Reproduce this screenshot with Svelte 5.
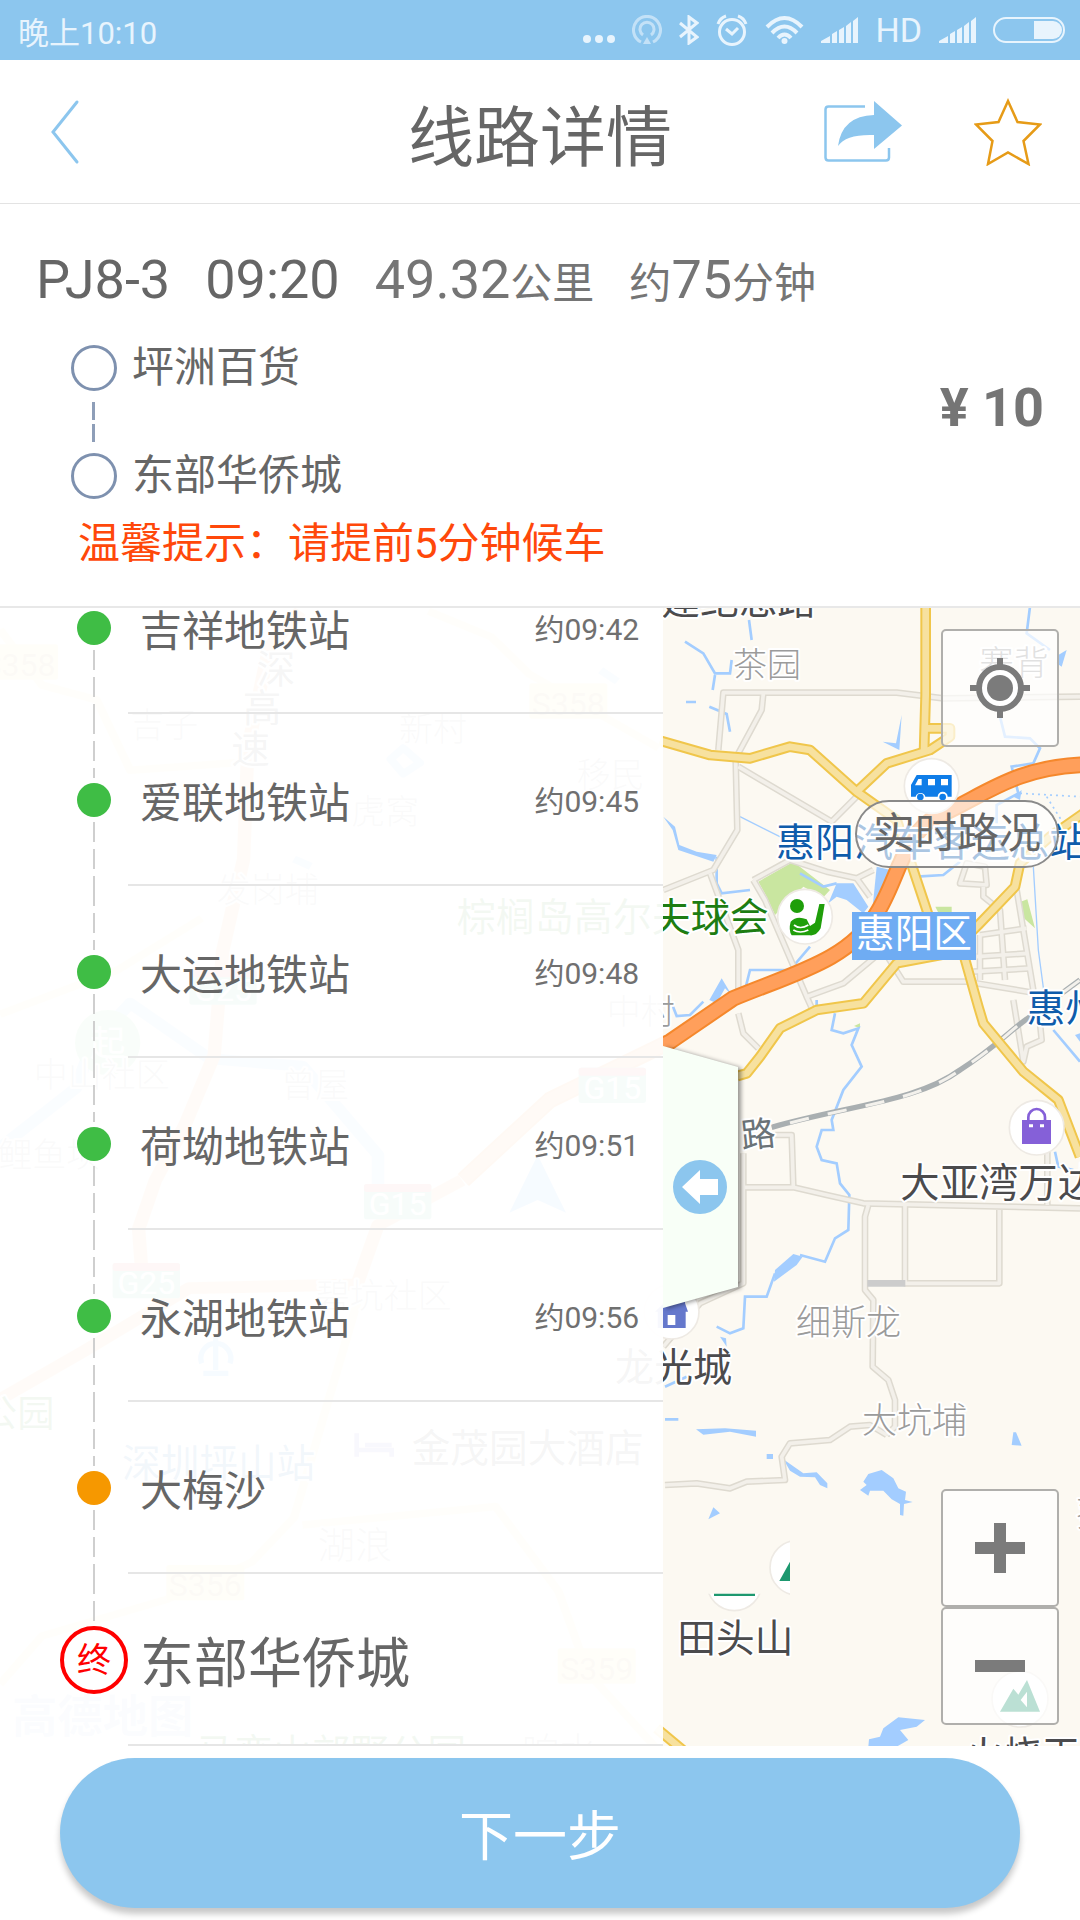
<script>
  const stations = [
    { name: '吉祥地铁站', time: '约09:42' },
    { name: '爱联地铁站', time: '约09:45' },
    { name: '大运地铁站', time: '约09:48' },
    { name: '荷坳地铁站', time: '约09:51' },
    { name: '永湖地铁站', time: '约09:56' },
    { name: '大梅沙', time: '', kind: 'drop' },
    { name: '东部华侨城', time: '', kind: 'terminal' }
  ];

  const minorRoads = [
    'M1290 290L880 295L740 278H220L205 450',
    'M340 280L335 330L265 460',
    'M257 480L262 690L190 810L40 870',
    'M265 500L545 665L620 590',
    'M180 820L265 1050V1200',
    'M310 840L420 780L530 815L620 835L670 810',
    'M310 840L345 900L470 1190L580 1150L700 1050',
    'M620 835L660 890',
    'M265 1240L280 1300L325 1345',
    'M470 1190L490 1235',
    'M930 850L950 790L1005 800L1010 855Z',
    'M1000 860V890L1050 930L1065 1140',
    'M1100 870L1150 1170',
    'M990 1005L1130 985M980 1070L1135 1060M970 1115L1140 1105',
    'M990 1005V1140M700 1050L760 1145H950L1160 1180',
    'M1090 1200L1120 1385L1130 1340L1175 1320L1170 1270',
    'M375 1605H425L430 1760',
    'M285 1762H430L530 1785L640 1810L1290 1825',
    'M280 1660V2050L150 2110L40 2240',
    'M655 1815L645 1850V2070L670 2100L668 2300L715 2340L735 2400V2480L710 2505',
    'M765 1815V2050H1048V1830',
    'M1192 1655V1815',
    'M45 2655L140 2650L240 2665L290 2645L405 2640L395 2570L420 2530L540 2520L600 2480L660 2475L710 2505'
  ];

  const mainRoads = [
    'M30 422L180 465L300 475L420 440L480 450L620 575L740 660L790 810L840 960L940 1060L985 1220L1000 1270L1120 1415L1225 1500L1290 1670',
    'M620 575L710 490L840 450L900 410V385H825',
    'M827 0V285L822 460',
    'M1300 640L1200 710L1110 790L1095 860L985 975L900 1060L740 1090L690 1150L640 1210L500 1230L390 1285L330 1370L290 1420L262 1428',
    'M20 3385L110 3460'
  ];

  const highway = 'M1310 494C1090 500 1000 590 860 650C760 700 740 850 680 940C600 1080 430 1120 250 1195L60 1325L-300 1500L-560 1740';

  const streams = [
    'M297 60L305 120M105 125L160 160L195 220H240L245 180M195 225L188 270M108 306H138M178 320L230 342L240 395',
    'M1140 20L1130 100L1200 150',
    'M1050 350L1065 410L1140 415L1170 445L1150 490L1085 500L1105 580L1040 615V670',
    'M200 770V850L215 880L300 870M450 820L520 860L560 850',
    'M800 830L880 825L930 785',
    'M480 1040L420 1110L300 1110L285 1170',
    'M65 1210L80 1248L120 1245L160 1205M500 1200V1220',
    'M555 1240L545 1290L580 1300L625 1285L605 1335L635 1400L580 1470L545 1560L550 1590H515L500 1640L515 1680L560 1690L570 1750L598 1785L595 1890L555 1915L525 1985L450 1965',
    'M375 2020L350 2090H285L280 2185L240 2200L200 2180M1210 1290L1290 1385',
    'M45 2360L110 2330M45 2458H85M1215 1655L1225 1700L1270 1710'
  ];

  const lakes = [
    '755,345 748,450 698,425 738,430',
    '40,650 75,680 88,735 140,755 200,765 190,785 85,750 68,690',
    '560,850 610,850 655,920 640,940 590,900 560,890 535,910',
    '680,800 722,810 700,870 668,920',
    '1225,165 1250,150 1235,200 1220,190',
    '1090,590 1115,570 1110,600',
    '178,1200 215,1135 245,1185 225,1165 200,1210',
    '375,2010 430,1962 458,1970 440,1995 372,2045',
    '138,2488 225,2485 318,2492 318,2510 240,2495 160,2504',
    '350,2562 369,2562 369,2577 350,2577',
    '400,2578 460,2620 500,2617 532,2650 532,2665 510,2655 495,2632 450,2630 420,2612',
    '630,2670 650,2655 640,2645 655,2622 695,2610 730,2635 745,2665 768,2675 765,2700 788,2706 762,2712 760,2747 750,2745 750,2712 725,2698 700,2672 660,2672 655,2687',
    '175,2758 190,2722 210,2740',
    '1085,2535 1090,2497 1098,2497 1115,2537',
    '655,3440 657,3418 690,3410 700,3385 745,3352 825,3360 800,3380 750,3390 775,3420 740,3440',
    '1275,1305 1290,1300 1290,1325',
    '210,2210 228,2215 230,2240'
  ];

  const westHighways = [
    'M715 30L640 130L590 400L580 700L530 950L510 1230L440 1420L370 1568L330 1700L340 1850',
    'M1100 1568L900 1690L850 1850L450 1860L200 2030L0 2160'
  ];
  const westRoads = [
    'M0 80L100 230L230 270L310 460L560 440',
    'M1020 30L1170 100L1260 200L1568 400',
    'M0 1120L280 1000L480 860',
    'M0 2930L100 2800L400 2700L600 2600L700 2480L850 1900',
    'M720 2500L1180 2450L1330 2680L1400 2900L1568 3110'
  ];

  const labels = [
    { t: '建纪恩路', x: 34, y: 42, s: 116, k: 'dark' },
    { t: '茶园', x: 249, y: 232, s: 102, k: 'grey' },
    { t: '寨背', x: 988, y: 226, s: 104, k: 'grey' },
    { t: '惠阳汽车客运总站', x: 378, y: 768, s: 117, k: 'blue' },
    { t: '棕榈岛高尔夫球会', x: -580, y: 993, s: 117, k: 'green' },
    { t: '惠州', x: 1130, y: 1266, s: 116, k: 'blue' },
    { t: '中村', x: -130, y: 1272, s: 102, k: 'grey' },
    { t: '大亚湾万达广场', x: 751, y: 1792, s: 118, k: 'dark' },
    { t: '细斯龙', x: 438, y: 2204, s: 105, k: 'grey' },
    { t: '龙光城', x: -105, y: 2342, s: 117, k: 'dark' },
    { t: '大坑埔', x: 636, y: 2498, s: 105, k: 'grey' },
    { t: '葵', x: 1278, y: 2778, s: 105, k: 'grey' },
    { t: '田头山', x: 82, y: 3156, s: 116, k: 'dark' },
    { t: '火烧天', x: 943, y: 3508, s: 116, k: 'dark' },
    { t: '吉子', x: -1559, y: 411, s: 102, k: 'grey' },
    { t: '新村', x: -753, y: 422, s: 102, k: 'grey' },
    { t: '移民', x: -220, y: 560, s: 102, k: 'grey' },
    { t: '虎窝', x: -896, y: 672, s: 102, k: 'grey' },
    { t: '发岗埔', x: -1300, y: 905, s: 102, k: 'grey' },
    { t: '深', x: -1180, y: 250, s: 116, k: 'dark' },
    { t: '高', x: -1222, y: 366, s: 116, k: 'dark' },
    { t: '速', x: -1256, y: 488, s: 116, k: 'dark' },
    { t: '中山社区', x: -1849, y: 1460, s: 102, k: 'grey' },
    { t: '曾屋', x: -1107, y: 1492, s: 102, k: 'grey' },
    { t: '鲤鱼坝', x: -1955, y: 1702, s: 102, k: 'grey' },
    { t: '碧坑社区', x: -1003, y: 2124, s: 102, k: 'grey' },
    { t: '公园', x: -2010, y: 2480, s: 112, k: 'green' },
    { t: '深圳坪山站', x: -1584, y: 2630, s: 116, k: 'blue' },
    { t: '金茂园大酒店', x: -715, y: 2586, s: 116, k: 'dark' },
    { t: '湖浪', x: -997, y: 2878, s: 112, k: 'grey' },
    { t: '马峦山郊野公园', x: -1363, y: 3500, s: 116, k: 'green' },
    { t: '响水', x: -384, y: 3495, s: 112, k: 'grey' }
  ];

  const shields = [
    { t: 'S358', x: -2010, y: 133, k: 'provincial' },
    { t: 'S358', x: -362, y: 250, k: 'provincial' },
    { t: 'G25', x: -1382, y: 1108, k: 'national' },
    { t: 'G15', x: -214, y: 1403, k: 'national' },
    { t: 'G15', x: -858, y: 1752, k: 'national' },
    { t: 'G25', x: -1612, y: 1989, k: 'national' },
    { t: 'S356', x: -1451, y: 2895, k: 'provincial' },
    { t: 'S359', x: -277, y: 3145, k: 'provincial' }
  ];
</script>

{#snippet signal()}
  <svg width="37" height="26" viewBox="0 0 37 26" fill="currentColor" aria-hidden="true">
    <path d="M0 26V24L9 19V26ZM11 17L16 14V26H11ZM18 13L23 10V26H18ZM25 9L30 5V26H25ZM32 4L37 0V26H32Z" />
  </svg>
{/snippet}

<div class="screen">
  <div class="status">
    <span class="clock">晚上10:10</span>
    <div class="status-icons">
      <svg width="32" height="30" viewBox="0 0 32 30" fill="currentColor" aria-hidden="true">
        <circle cx="4" cy="24" r="4" /><circle cx="16" cy="24" r="4" /><circle cx="28" cy="24" r="4" />
      </svg>
      <svg class="dim" width="30" height="30" viewBox="0 0 30 30" fill="none" stroke="currentColor" stroke-width="3" aria-hidden="true">
        <path d="M9 27A13.500 13.500 0 1 1 21 27M11 20A7 7 0 1 1 19 20" />
        <path d="M15 22L19 29H11Z" fill="currentColor" stroke="none" />
      </svg>
      <svg width="20" height="30" viewBox="0 0 20 30" fill="none" stroke="currentColor" stroke-width="3" aria-hidden="true">
        <path d="M1 8L18 22L10 28V2L18 8L1 22" />
      </svg>
      <svg width="32" height="32" viewBox="0 0 32 32" fill="none" stroke="currentColor" stroke-width="3" aria-hidden="true">
        <circle cx="16" cy="18" r="12.500" /><path d="M10 15L16 20L22 14M2 10Q4 4 10 2M30 10Q28 4 22 2" />
      </svg>
      <svg width="39" height="28" viewBox="0 0 39 28" fill="none" stroke="currentColor" stroke-width="4" aria-hidden="true">
        <path d="M2 11Q19.500 -7 37 11M7 17Q19.500 4 32 17M13 22Q19.500 15 26 22" />
        <circle cx="19.500" cy="25" r="3" fill="currentColor" stroke="none" />
      </svg>
      {@render signal()}
      <span class="hd">HD</span>
      {@render signal()}
      <svg width="72" height="26" viewBox="0 0 72 26" fill="none" aria-hidden="true">
        <rect x="1" y="1" width="70" height="24" rx="12" stroke="currentColor" stroke-width="2" />
        <path d="M41 4H60A9 9 0 0 1 60 22H41Z" fill="currentColor" />
      </svg>
    </div>
  </div>

  <header class="bar">
    <button class="icon-btn back" aria-label="返回">
      <svg width="30" height="66" viewBox="0 0 30 66" fill="none" stroke="#8cc6ee" stroke-width="3" stroke-linecap="round" aria-hidden="true">
        <path d="M27 3L3 33L27 63" />
      </svg>
    </button>
    <h1>线路详情</h1>
    <div class="actions">
      <button class="icon-btn" aria-label="分享">
        <svg width="78" height="62" viewBox="0 0 78 62" aria-hidden="true">
          <path d="M41 5.500H4.500Q1.500 5.500 1.500 8.500V56.500Q1.500 59.500 4.500 59.500H62Q65 59.500 65 56.500V47" fill="none" stroke="#8cc6ee" stroke-width="2.500" />
          <path d="M50 0L78 24.500L50 48V34Q22 33 14 45Q18 15 50 14Z" fill="#8cc6ee" />
        </svg>
      </button>
      <button class="icon-btn" aria-label="收藏">
        <svg width="68" height="68" viewBox="0 0 68 68" fill="none" stroke="#e69b17" stroke-width="2.500" aria-hidden="true">
          <path d="M34 3L43.500 24L66 26.500L49.500 43L54.500 66L34 54.500L14 66L18.500 43L2 26.500L24.500 24Z" />
        </svg>
      </button>
    </div>
  </header>

  <section class="summary">
    <div class="facts">
      <span>PJ8-3</span>
      <span>09:20</span>
      <span class="soft">49.32<small>公里</small></span>
      <span class="soft"><small>约</small>75<small>分钟</small></span>
    </div>
    <div class="route">
      <div class="ends">
        <div class="end"><i class="ring"></i><span>坪洲百货</span></div>
        <div class="link"><i></i><i></i></div>
        <div class="end"><i class="ring"></i><span>东部华侨城</span></div>
      </div>
      <strong class="price">¥ 10</strong>
    </div>
    <p class="tip">温馨提示：请提前5分钟候车</p>
  </section>

  <main class="stage">
    <svg class="map" viewBox="-1950 24 3240 3414" preserveAspectRatio="xMidYMid slice" aria-hidden="true">
      <defs>
        <clipPath id="tile-left"><rect x="300" y="2700" width="120" height="400" /></clipPath>
        <clipPath id="tile-low"><rect x="100" y="2981" width="320" height="100" /></clipPath>
      </defs>
      <rect x="-1950" y="24" width="3240" height="3414" fill="#fcf9f2" />

      <g fill="#c9e6a0">
        <path d="M325 845L430 785L540 870L520 892L460 860L375 945L350 890Z" />
        <path d="M1112 905L1132 898L1155 985L1122 955ZM722 812L715 870L680 910L695 820ZM856 920H905V948H870Z" />
        <path d="M612 1278L630 1270V1285Z" />
      </g>
      <g fill="none" stroke="#a3cdff" stroke-width="8">
        {#each streams as d}<path {d} />{/each}
        <path d="M1150 800L1165 1050L1185 1200M270 650L430 730" stroke-width="4" />
        <path d="M1110 580L1290 590M1190 590L1240 670" stroke-width="5" stroke-dasharray="6 12" />
      </g>
      <g fill="#a3cdff">
        {#each lakes as points}<polygon {points} />{/each}
      </g>

      <g fill="none" stroke-linejoin="round">
        {#each minorRoads as d}<path {d} stroke="#dedad0" stroke-width="20" />{/each}
        {#each minorRoads as d}<path {d} stroke="#f3f0ea" stroke-width="11" />{/each}
        <path d="M652 2050H766" stroke="#cccccc" stroke-width="20" />
        <path d="M365 1582C600 1515 800 1505 930 1410C1040 1340 1080 1290 1140 1250L1290 1140" stroke="#a9afb1" stroke-width="16" />
        <path d="M420 1569C620 1515 800 1505 930 1410C1040 1340 1080 1290 1140 1250L1290 1140" stroke="#f3f1ec" stroke-width="9" stroke-dasharray="58 58" />
        {#each mainRoads as d}<path {d} stroke="#f0c64b" stroke-width="32" />{/each}
        {#each mainRoads as d}<path {d} stroke="#f7e19f" stroke-width="20" />{/each}
        <path d={highway} stroke="#f5882c" stroke-width="50" />
        <path d={highway} stroke="#ff9f5b" stroke-width="38" />
        <g transform="translate(-1950 0) scale(1.26 1.11)">
          <path d="M0 1480L180 1320L220 1200L310 1090L500 1240L720 1260L900 1500V1600" stroke="#a3cdff" stroke-width="30" />
          <path d="M930 430L960 400L1000 440L960 470ZM1430 190L1470 220M700 700L740 720" stroke="#a3cdff" stroke-width="20" />
          {#each westRoads as d}<path {d} stroke="#f9e6b0" stroke-width="20" />{/each}
          {#each westHighways as d}<path {d} stroke="#ffb27c" stroke-width="32" />{/each}
        </g>
      </g>

      <g class="poi">
        <circle cx="845" cy="558" r="82" />
        <circle cx="465" cy="950" r="82" />
        <circle cx="1160" cy="1583" r="82" />
        <circle cx="65" cy="2135" r="82" />
        <circle cx="1110" cy="3297" r="84" />
        <circle cx="442" cy="2903" r="82" clip-path="url(#tile-left)" />
        <circle cx="253" cy="2950" r="82" clip-path="url(#tile-low)" />
      </g>
      <path d="M783 555L800 525H905V590H893A15 15 0 0 0 863 590H826A15 15 0 0 0 797 590H783ZM795 556H815V537H805ZM834 537V556H855V537ZM873 537V556H894V537Z" fill="#0f7de8" fill-rule="evenodd" />
      <circle cx="811" cy="591" r="10" fill="#0f7de8" /><circle cx="878" cy="591" r="10" fill="#0f7de8" />
      <g fill="#1f9e0a">
        <circle cx="441" cy="918" r="21" />
        <path d="M422 965Q440 945 470 958L480 978L495 968L508 912H524L512 985Q500 1008 480 1006H425Q415 990 422 965Z" />
        <path d="M432 975Q450 990 475 975M430 990Q450 1002 475 990" fill="none" stroke="#fff" stroke-width="5" />
      </g>
      <path d="M1116 1560H1203V1632H1116Z" fill="#8560d8" />
      <path d="M1135 1562V1552A24 24 0 0 1 1185 1552V1562" fill="none" stroke="#8560d8" stroke-width="8" />
      <path d="M1137 1573H1149V1582H1137ZM1170 1573H1182V1582H1170Z" fill="#fff" />
      <path d="M15 2135L62 2090H105V2110L114 2135H107V2184H23V2135ZM53 2145V2175H76V2145Z" fill="#6578cc" fill-rule="evenodd" />
      <path d="M1050 3335L1090 3266L1105 3284L1131 3240L1170 3335ZM1131 3275L1112 3300L1131 3322Z" fill="#1d986f" fill-rule="evenodd" />
      <path d="M388 2943L420 2885V2943ZM192 2981H315V2988H192Z" fill="#1d986f" />
      <circle cx="-1627" cy="1328" r="98" fill="#8ad997" />
      <path d="M-337 1665L-422 1838L-337 1800L-252 1838Z" fill="#5aa5f0" />
      <path d="M-880 2500V2570M-880 2550H-775V2570M-855 2535H-775" stroke="#7d6fd0" stroke-width="14" fill="none" />
      <path d="M-1345 2290A45 45 0 1 1 -1260 2290M-1340 2320H-1265M-1303 2210V2310" stroke="#5aa5f0" stroke-width="16" fill="none" />

      {#each shields as s}
        {@const w = s.t.length === 4 ? 234 : 202}
        <g transform="translate({s.x} {s.y})">
          <rect width={w} height="106" rx="8" class={s.k} />
          {#if s.k === 'national'}<rect width={w} height="24" rx="8" fill="#e8605c" />{/if}
          <text class="shield {s.k}-text" x={w / 2} y="94" text-anchor="middle">{s.t}</text>
        </g>
      {/each}

      {#each labels as l}
        <text class="label {l.k}" x={l.x} y={l.y} font-size={l.s}>{l.t}</text>
      {/each}
      <text class="area" x="-1680" y="1368" font-size="106">起</text>
      <text class="label road" x="272" y="1640" font-size="104" transform="rotate(-6 325 1600)">路</text>
      <text class="label brand" x="-1914" y="3398" font-size="136">高德地图</text>

      <rect x="606" y="936" width="372" height="144" fill="#6facf3" />
      <text class="area" x="618" y="1042" font-size="116">惠阳区</text>
    </svg>

    <aside class="panel">
      <ol>
        {#each stations as s}
          <li class={s.kind ?? 'pick'}>
            <div class="track">
              <i class="dash"></i>
              {#if s.kind === 'terminal'}<b class="final">终</b>{:else}<b class="dot"></b>{/if}
              <i class="dash" class:hidden={s.kind === 'terminal'}></i>
            </div>
            <div class="station">
              <span class="name">{s.name}</span>
              {#if s.time}<time>{s.time}</time>{/if}
            </div>
          </li>
        {/each}
      </ol>
    </aside>

    <button class="handle" aria-label="收起站点列表">
      <svg width="75" height="262" viewBox="0 0 75 262" aria-hidden="true">
        <path d="M0 0L75 21V241L0 262Z" fill="#f8fff7" />
        <circle cx="37" cy="141" r="27" fill="#8cc6ee" />
        <path d="M19 141L37 124V133H55V149H37V158Z" fill="#fff" />
      </svg>
    </button>

    <div class="controls">
      <button class="square" aria-label="定位">
        <svg width="60" height="60" viewBox="0 0 60 60" fill="none" stroke="#7b7b7b" aria-hidden="true">
          <circle cx="30" cy="30" r="18" stroke="#fff" stroke-width="10" />
          <circle cx="30" cy="30" r="21" stroke-width="6" />
          <circle cx="30" cy="30" r="13" fill="#7b7b7b" stroke="none" />
          <path d="M30 0V8M30 52V60M0 30H8M52 30H60" stroke-width="6" />
        </svg>
      </button>
      <button class="traffic">实时路况</button>
      <div class="zoom">
        <button class="square" aria-label="放大">
          <svg width="50" height="50" viewBox="0 0 50 50" fill="#7b7b7b" aria-hidden="true">
            <path d="M19 0H31V19H50V31H31V50H19V31H0V19H19Z" />
          </svg>
        </button>
        <button class="square" aria-label="缩小">
          <svg width="50" height="50" viewBox="0 0 50 50" fill="#7b7b7b" aria-hidden="true">
            <path d="M0 19H50V31H0Z" />
          </svg>
        </button>
      </div>
    </div>
  </main>

  <footer>
    <button class="next">下一步</button>
  </footer>
</div>

<style>
  :global(body) {
    margin: 0;
    background: #fff;
  }
  .screen {
    display: flex;
    flex-direction: column;
    height: 100vh;
    background: #fff;
    color: #666;
    font-family: Roboto, 'Noto Sans CJK SC', sans-serif;
    font-size: 42px;
    font-weight: 400;
  }
  button {
    font: inherit;
    color: inherit;
    border: 0;
    padding: 0;
    background: none;
    cursor: pointer;
  }
  svg {
    display: block;
  }

  .status {
    display: flex;
    align-items: center;
    justify-content: space-between;
    flex: none;
    height: 60px;
    padding: 0 15px 0 18px;
    background: #8cc6ee;
    color: #e8f4fd;
    font-size: 31px;
  }
  .status-icons {
    display: flex;
    align-items: center;
    gap: 17px;
  }
  .dim {
    opacity: 0.6;
  }
  .hd {
    font-size: 34px;
  }

  .bar {
    display: grid;
    grid-template-columns: 1fr auto 1fr;
    align-items: center;
    flex: none;
    height: 143px;
    padding: 0 38px;
    border-bottom: 1px solid #e3e3e3;
  }
  h1 {
    margin: 0;
    font-family: 'Noto Sans CJK SC', sans-serif;
    font-size: 66px;
    font-weight: 400;
    line-height: 80px;
  }
  .back {
    justify-self: start;
    padding: 0 12px;
  }
  .actions {
    display: flex;
    align-items: center;
    justify-content: flex-end;
    gap: 72px;
  }

  .summary {
    flex: none;
    padding: 40px 36px 30px;
    border-bottom: 2px solid #e8e8e8;
  }
  .facts {
    display: flex;
    align-items: baseline;
    gap: 35px;
    font-size: 54px;
    line-height: 72px;
  }
  .facts small {
    font-size: 42px;
  }
  .soft {
    color: #757575;
  }
  .route {
    display: flex;
    align-items: flex-start;
    justify-content: space-between;
    padding: 18px 0 0 35px;
  }
  .end {
    display: flex;
    align-items: center;
    gap: 15px;
    line-height: 60px;
  }
  .ring {
    box-sizing: border-box;
    width: 46px;
    height: 46px;
    border: 3px solid #7e91af;
    border-radius: 50%;
  }
  .link {
    display: flex;
    flex-direction: column;
    gap: 4px;
    padding: 4px 0 4px 21px;
  }
  .link i {
    width: 3px;
    height: 18px;
    background: #8e9eb8;
  }
  .price {
    font-size: 54px;
    font-weight: 700;
    line-height: 140px;
    color: #757575;
  }
  .tip {
    margin: 6px 0 0 42px;
    color: #ff480a;
    line-height: 64px;
  }

  .stage {
    position: relative;
    display: flex;
    flex: 1;
    min-height: 0;
    overflow: hidden;
  }
  .map {
    position: absolute;
    inset: 0;
    width: 100%;
    height: 100%;
  }
  .poi circle {
    fill: #fff;
    stroke: #eeeae4;
    stroke-width: 5;
  }
  .label {
    paint-order: stroke;
    stroke: #fff;
    stroke-width: 12px;
    stroke-linejoin: round;
  }
  .dark {
    fill: #4b4b4d;
  }
  .grey {
    fill: #9b9b9b;
    font-weight: 300;
  }
  .blue {
    fill: #0f5cab;
  }
  .green {
    fill: #1d7d12;
  }
  .road {
    fill: #6b7378;
  }
  .brand {
    fill: #a9c8e8;
    font-weight: 700;
  }
  .area {
    fill: #fff;
  }
  .provincial {
    fill: #fbe38e;
  }
  .national {
    fill: #5fc7a4;
  }
  .shield {
    font-size: 96px;
  }
  .provincial-text {
    fill: #b89858;
  }
  .national-text {
    fill: #fff;
  }

  .panel {
    position: relative;
    display: flex;
    flex-direction: column-reverse;
    box-sizing: border-box;
    width: 61.4%;
    overflow-y: auto;
    scrollbar-width: none;
    background: rgba(255, 255, 255, 0.95);
  }
  ol {
    margin: 0;
    padding: 0;
    list-style: none;
  }
  li {
    display: flex;
    height: 172px;
  }
  .track {
    display: flex;
    flex-direction: column;
    align-items: center;
    width: 68px;
    padding-left: 60px;
  }
  .dash {
    flex: 1;
    width: 2px;
    background: repeating-linear-gradient(#cfcfcf 0 20px, transparent 20px 27px);
  }
  .hidden {
    visibility: hidden;
  }
  .dot {
    width: 34px;
    height: 34px;
    margin: 5px 0;
    border-radius: 50%;
    background: #3fbd45;
  }
  .drop .dot {
    background: #f69800;
  }
  .final {
    display: flex;
    align-items: center;
    justify-content: center;
    box-sizing: border-box;
    width: 68px;
    height: 68px;
    border: 4px solid #f00;
    border-radius: 50%;
    color: #f00;
    font-size: 34px;
    font-weight: 400;
    line-height: 40px;
  }
  .station {
    display: flex;
    flex: 1;
    align-items: center;
    justify-content: space-between;
    padding: 0 24px 0 12px;
    border-bottom: 2px solid #e6e6e6;
  }
  .terminal .name {
    font-family: 'Noto Sans CJK SC', sans-serif;
    font-size: 54px;
  }
  time {
    font-size: 30px;
    color: #707070;
  }

  .handle {
    position: relative;
    align-self: center;
    filter: drop-shadow(3px 1px 2px rgba(0, 0, 0, 0.4));
    clip-path: inset(-10px -10px -10px 0);
  }

  .controls {
    position: relative;
    display: flex;
    flex: 1;
    flex-direction: column;
    align-items: flex-end;
    padding: 21px;
  }
  .square {
    display: flex;
    align-items: center;
    justify-content: center;
    box-sizing: border-box;
    width: 118px;
    height: 118px;
    border: 2px solid #b0afac;
    border-radius: 5px;
    background: rgba(255, 255, 255, 0.7);
  }
  .traffic {
    margin-top: 53px;
    padding: 0 16px;
    border: 2px solid #8a8a8a;
    border-radius: 36px;
    background: rgba(255, 255, 255, 0.65);
    line-height: 64px;
    white-space: nowrap;
  }
  .zoom {
    margin-top: auto;
  }

  footer {
    flex: none;
    padding: 12px 60px;
  }
  .next {
    display: block;
    width: 100%;
    border-radius: 75px;
    background: #8cc6ee;
    box-shadow: 0 6px 6px rgba(0, 0, 0, 0.22);
    color: #fff;
    font-family: 'Noto Sans CJK SC', sans-serif;
    font-size: 54px;
    line-height: 150px;
  }
</style>
